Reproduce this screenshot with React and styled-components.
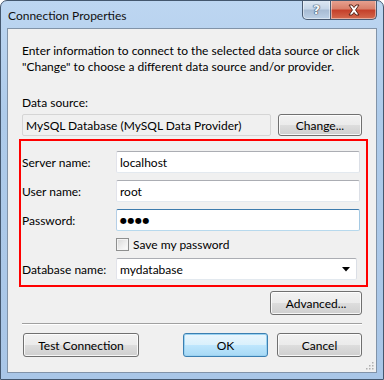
import React from 'react';
import styled, { createGlobalStyle } from 'styled-components';

const GlobalStyle = createGlobalStyle`
  html, body {
    margin: 0;
    padding: 0;
    background: #ffffff;
  }
  body {
    font-family: Lato, "Noto Sans", sans-serif;
    font-size: 12px;
    color: #000;
  }
`;

const Window = styled.div`
  box-sizing: border-box;
  width: 384px;
  height: 380px;
  display: flex;
  flex-direction: column;
  border: 1px solid #44576e;
  border-radius: 7px 7px 0 0;
  background: linear-gradient(180deg, #bdd6f1 0%, #aecbea 30%, #a9c6e7 100%);
  overflow: hidden;
`;

const TitleBar = styled.div`
  height: 27px;
  display: flex;
  justify-content: space-between;
  align-items: flex-start;
`;

const Title = styled.div`
  padding: 7px 0 0 7px;
  font-size: 12px;
  color: #111;
`;

const Caption = styled.div`
  display: flex;
  margin-right: 6px;
  margin-top: -1px;
`;

const CaptionButton = styled.div`
  box-sizing: border-box;
  width: ${p => p.$w}px;
  height: 20px;
  display: flex;
  align-items: center;
  justify-content: center;
  border: 1px solid #4a5b72;
  border-top: none;
  border-left-width: ${p => (p.$first ? 1 : 0)}px;
  border-radius: ${p => (p.$first ? '0 0 0 5px' : '0 0 5px 0')};
  background: ${p =>
    p.$danger
      ? 'linear-gradient(180deg, #e8a493 0%, #d9806b 45%, #c5412b 55%, #d46a4e 100%)'
      : 'linear-gradient(180deg, #dfe9f4 0%, #c6d6e8 45%, #a8bcd4 55%, #bcd0e6 100%)'};
  box-shadow: inset 0 0 0 1px rgba(255, 255, 255, 0.45);
`;

const HelpGlyph = styled.span`
  font-family: "DejaVu Sans", sans-serif;
  font-weight: bold;
  font-size: 13px;
  color: #f4f7fb;
  text-shadow: 0 0 1px #33455c, 0 0 1px #33455c, 0 0 1px #33455c;
  margin-top: -1px;
`;

const Client = styled.div`
  flex: 1;
  margin: 0 6px 6px 6px;
  border: 1px solid #8193a8;
  background: #f0f0f0;
  padding: 14px 14px 0 14px;
  display: flex;
  flex-direction: column;
  position: relative;
`;

const Intro = styled.p`
  margin: 0;
  line-height: 16px;
  white-space: nowrap;
`;

const FieldLabel = styled.div`
  margin-top: 20px;
  line-height: 16px;
`;

const SourceRow = styled.div`
  display: flex;
  gap: 7px;
  margin-top: 3px;
`;

const ReadOnlyBox = styled.div`
  box-sizing: border-box;
  flex: 1;
  height: 22px;
  padding: 0 3px;
  display: flex;
  align-items: center;
  border: 1px solid #d5d5d5;
  border-radius: 2px;
  background: #f0f0f0;
`;

const Button = styled.div`
  box-sizing: border-box;
  width: ${p => p.$w}px;
  height: ${p => p.$h || 23}px;
  display: flex;
  align-items: center;
  justify-content: center;
  border: 1px solid ${p => (p.$default ? '#3c7fb1' : '#707070')};
  border-radius: 3px;
  background: ${p =>
    p.$default
      ? 'linear-gradient(180deg, #eaf6fd 0%, #d9f0fc 50%, #bee6fd 51%, #a7d9f5 100%)'
      : 'linear-gradient(180deg, #f2f2f2 0%, #ebebeb 50%, #dddddd 51%, #cfcfcf 100%)'};
  box-shadow: inset 0 0 0 1px ${p => (p.$default ? '#9ad2f1' : 'rgba(255,255,255,0.8)')};
  color: #000;
`;

const Group = styled.div`
  margin: 3px -6px 0 -3px;
  border: 2px solid #ff0000;
  padding: 10px 6px 5px 1px;
  display: flex;
  flex-direction: column;
  gap: 7px;
`;

const Row = styled.div`
  display: grid;
  grid-template-columns: 94px 1fr;
  align-items: center;
`;

const Label = styled.div`
  line-height: 16px;
  padding-top: 2px;
`;

const Input = styled.div`
  box-sizing: border-box;
  height: 22px;
  margin-right: ${p => p.$inset || 0}px;
  padding: 0 3px;
  display: flex;
  align-items: center;
  justify-content: space-between;
  background: #ffffff;
  border: 1px solid;
  border-color: ${p =>
    p.$focused ? '#3d7bad #a4c9e3 #b7d9ed #b5cfe7' : '#abadb3 #dbdfe6 #e3e9ef #e2e3ea'};
  border-radius: 2px;
`;

const Dots = styled.span`
  font-family: "DejaVu Sans", sans-serif;
  font-size: 8px;
  letter-spacing: 0.5px;
  color: #000;
`;

const CheckRow = styled.div`
  height: 13px;
  display: flex;
  align-items: center;
  gap: 4px;
  margin-left: 94px;
`;

const CheckBox = styled.span`
  box-sizing: border-box;
  width: 13px;
  height: 13px;
  border: 1px solid #8e8f8f;
  background: linear-gradient(135deg, #d8d8d8 0%, #f0f0f0 60%, #fdfdfd 100%);
  box-shadow: inset 0 0 0 1px #f4f4f4;
`;

const RightRow = styled.div`
  display: flex;
  justify-content: flex-end;
  margin-top: ${p => p.$mt}px;
`;

const Separator = styled.div`
  margin-top: 8px;
  height: 1px;
  background: #a0a0a0;
  border-bottom: 1px solid #ffffff;
`;

const Footer = styled.div`
  display: flex;
  align-items: center;
  margin-top: 8px;
  padding-left: 1px;
`;

const Spacer = styled.div`
  flex: 1;
`;

const Grip = styled.svg`
  position: absolute;
  right: 2px;
  bottom: 2px;
`;

const Arrow = () => (
  <svg width="8" height="5" viewBox="0 0 8 5">
    <path d="M0 0 H8 L4 4.5 Z" fill="#000" />
  </svg>
);

const CloseGlyph = () => (
  <svg width="14" height="12" viewBox="0 0 14 12">
    <path
      d="M2 1 L5 1 L7 3.5 L9 1 L12 1 L8.6 6 L12 11 L9 11 L7 8.5 L5 11 L2 11 L5.4 6 Z"
      fill="#ffffff"
      stroke="#5a2418"
      strokeWidth="1"
      strokeLinejoin="round"
    />
  </svg>
);

const App = () => (
  <>
    <GlobalStyle />
    <Window>
      <TitleBar>
        <Title>Connection Properties</Title>
        <Caption>
          <CaptionButton $w={29} $first>
            <HelpGlyph>?</HelpGlyph>
          </CaptionButton>
          <CaptionButton $w={46} $danger>
            <CloseGlyph />
          </CaptionButton>
        </Caption>
      </TitleBar>
      <Client>
        <Intro>
          Enter information to connect to the selected data source or click
          <br />
          "Change" to choose a different data source and/or provider.
        </Intro>
        <FieldLabel>Data source:</FieldLabel>
        <SourceRow>
          <ReadOnlyBox>MySQL Database (MySQL Data Provider)</ReadOnlyBox>
          <Button $w={84} $h={22}>Change...</Button>
        </SourceRow>
        <Group>
          <Row>
            <Label>Server name:</Label>
            <Input>localhost</Input>
          </Row>
          <Row>
            <Label>User name:</Label>
            <Input>root</Input>
          </Row>
          <Row>
            <Label>Password:</Label>
            <Input $focused>
              <Dots>●●●●</Dots>
            </Input>
          </Row>
          <CheckRow>
            <CheckBox />
            <span>Save my password</span>
          </CheckRow>
          <Row>
            <Label>Database name:</Label>
            <Input $inset={3}>
              mydatabase
              <span style={{ display: 'flex', marginRight: 3 }}>
                <Arrow />
              </span>
            </Input>
          </Row>
        </Group>
        <RightRow $mt={4}>
          <Button $w={92} $h={24}>Advanced...</Button>
        </RightRow>
        <Separator />
        <Footer>
          <Button $w={116} $h={24}>Test Connection</Button>
          <Spacer />
          <Button $w={85} $h={24} $default>OK</Button>
          <Button $w={85} $h={24} style={{ marginLeft: 9 }}>Cancel</Button>
        </Footer>
        <Grip width="10" height="10" viewBox="0 0 10 10">
          {[
            [8, 2],
            [5, 5],
            [8, 5],
            [2, 8],
            [5, 8],
            [8, 8],
          ].map(([x, y]) => (
            <rect key={`${x}-${y}`} x={x} y={y} width="1.5" height="1.5" fill="#b0b0b0" />
          ))}
        </Grip>
      </Client>
    </Window>
  </>
);

export default App;
